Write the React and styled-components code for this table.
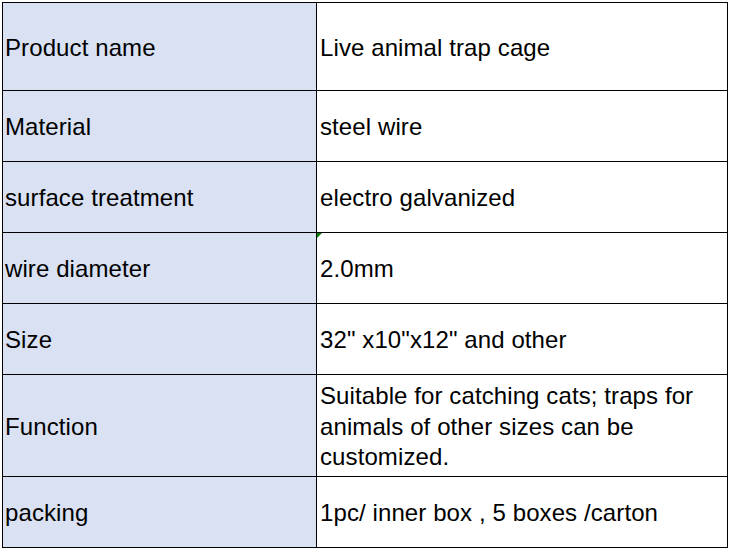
import React from "react";
import styled, { createGlobalStyle } from "styled-components";

const GlobalStyle = createGlobalStyle`
  html, body {
    margin: 0;
    padding: 0;
    background: #ffffff;
  }
  body {
    font-family: "Liberation Sans", Arial, sans-serif;
  }
`;

const rows = [
  { label: "Product name", value: "Live animal trap cage", height: 88 },
  { label: "Material", value: "steel wire", height: 71 },
  { label: "surface treatment", value: "electro galvanized", height: 71 },
  { label: "wire diameter", value: "2.0mm", height: 71, flag: true },
  { label: "Size", value: "32\" x10\"x12\" and other", height: 71 },
  {
    label: "Function",
    value:
      "Suitable for catching cats; traps for animals of other sizes can be customized.",
    height: 102,
  },
  { label: "packing", value: "1pc/ inner box , 5 boxes /carton", height: 71 },
];

export default function App() {
  return (
    <>
      <GlobalStyle />
      <Page>
        <Sheet rows={rows.map((r) => r.height + "px").join(" ")}>
          {rows.map((row) => (
            <React.Fragment key={row.label}>
              <LabelCell>{row.label}</LabelCell>
              <ValueCell>
                {row.flag && <ErrorFlag />}
                {row.value}
              </ValueCell>
            </React.Fragment>
          ))}
        </Sheet>
      </Page>
    </>
  );
}

const Page = styled.div`
  padding: 2px 0 0 2px;
`;

const Sheet = styled.div`
  display: grid;
  grid-template-columns: 314px 411px;
  grid-template-rows: ${(p) => p.rows};
  width: max-content;
  border-top: 1px solid #000;
  border-left: 1px solid #000;
`;

const Cell = styled.div`
  position: relative;
  display: flex;
  align-items: center;
  box-sizing: border-box;
  padding-top: 3px;
  border-right: 1px solid #000;
  border-bottom: 1px solid #000;
  font-size: 24px;
  line-height: 30.5px;
  letter-spacing: 0.1px;
  color: #000;
`;

const LabelCell = styled(Cell)`
  background: #d9e1f2;
  padding-left: 2px;
`;

const ValueCell = styled(Cell)`
  background: #ffffff;
  padding-left: 3px;
  padding-right: 4px;
`;

const ErrorFlag = styled.span`
  position: absolute;
  top: 0;
  left: 0;
  width: 0;
  height: 0;
  border-top: 5px solid #008000;
  border-right: 5px solid transparent;
`;
